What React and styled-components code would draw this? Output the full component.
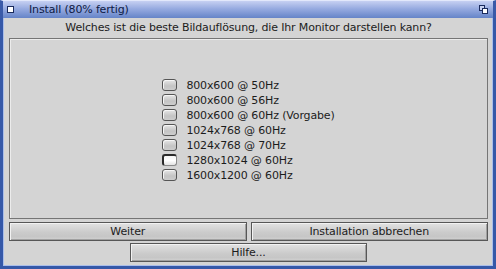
import React from 'react';
import styled, { createGlobalStyle } from 'styled-components';

const Global = createGlobalStyle`
  html, body { margin: 0; padding: 0; background: #d4d4d4; }
  body { font-family: "DejaVu Sans", Verdana, sans-serif; }
`;

const Window = styled.div`
  width: 496px;
  height: 269px;
  display: flex;
  flex-direction: column;
  box-sizing: border-box;
  font-family: "DejaVu Sans", Verdana, sans-serif;
  font-size: 11px;
  letter-spacing: -0.15px;
  color: #1c1c1c;
`;

const TitleBar = styled.div`
  height: 18px;
  flex: none;
  display: flex;
  align-items: center;
  box-sizing: border-box;
  background: linear-gradient(#c6d0f2, #97abe0 45%, #6584c8);
  border-top: 1px solid #e2e8fb;
  border-left: 3px solid #3a5aa8;
  border-right: 3px solid #3a5aa8;
  padding: 0 3px 0 4px;
`;

const CloseGadget = styled.div`
  width: 5px;
  height: 5px;
  background: #ffffff;
  border: 1px solid #1a2a5c;
  flex: none;
`;

const Title = styled.span`
  margin-left: 15px;
  color: #0e1a44;
  flex: 1;
  line-height: 16px;
`;

const Frame = styled.div`
  flex: 1;
  display: flex;
  flex-direction: column;
  background: #d4d4d4;
  border: 3px solid #3558a8;
  border-top: none;
  box-shadow: inset 1px 0 0 #a9bdea, inset -1px 0 0 #a9bdea, inset 0 -1px 0 #a9bdea;
  padding: 0 5px 4px 6px;
  min-height: 0;
`;

const Question = styled.div`
  height: 20px;
  flex: none;
  display: flex;
  align-items: center;
  justify-content: center;
  padding-bottom: 1px;
  box-sizing: border-box;
`;

const Panel = styled.div`
  height: 181px;
  flex: none;
  box-sizing: border-box;
  border: 1px solid #757575;
  box-shadow: inset 1px 1px 0 #ececec;
  background: #d4d4d4;
  display: flex;
  align-items: center;
  justify-content: center;
  padding-top: 3px;
`;

const List = styled.div`
  display: flex;
  flex-direction: column;
`;

const Row = styled.div`
  height: 15px;
  display: flex;
  align-items: center;
  gap: 9px;
`;

const Check = styled.span`
  width: 15px;
  height: 12px;
  box-sizing: border-box;
  border-radius: 3px;
  flex: none;
  border: 1px solid #4e4e4e;
  border-top-width: ${p => (p.$checked ? '2px' : '1px')};
  border-left-width: ${p => (p.$checked ? '2px' : '1px')};
  border-color: ${p => (p.$checked ? '#2a2a2a #8a8a8a #8a8a8a #2a2a2a' : '#555')};
  background: ${p =>
    p.$checked
      ? 'linear-gradient(#f4f4f4, #ffffff 50%, #e2e2e2)'
      : 'linear-gradient(#e6e6e6, #c4c4c4 60%, #cdcdcd)'};
  box-shadow: ${p => (p.$checked ? 'none' : 'inset 1px 1px 0 #f6f6f6')};
`;

const ButtonRow = styled.div`
  display: grid;
  grid-template-columns: 1fr 1fr;
  gap: 4px;
  margin-top: 3px;
`;

const Button = styled.div`
  height: 19px;
  box-sizing: border-box;
  border: 1px solid #575757;
  box-shadow: inset 1px 1px 0 #f2f2f2, inset -1px -1px 0 #a0a0a0;
  background: linear-gradient(#e2e2e2, #cbcbcb 55%, #c6c6c6 80%, #d2d2d2);
  display: flex;
  align-items: center;
  justify-content: center;
  color: #1c1c1c;
  ${p => (p.$narrow ? 'width: 237px; align-self: center;' : '')}
`;

const HelpRow = styled.div`
  display: flex;
  justify-content: center;
  margin-top: 2px;
`;

const DepthGadget = () => (
  <svg width="9" height="9" viewBox="0 0 9 9" style={{ flex: 'none', marginRight: 2 }}>
    <rect x="0.5" y="0.5" width="5" height="5" fill="#c9d3f2" stroke="#1a2a5c" />
    <rect x="3.5" y="3.5" width="5" height="5" fill="#ffffff" stroke="#1a2a5c" />
  </svg>
);

const options = [
  { label: '800x600 @ 50Hz' },
  { label: '800x600 @ 56Hz' },
  { label: '800x600 @ 60Hz (Vorgabe)' },
  { label: '1024x768 @ 60Hz' },
  { label: '1024x768 @ 70Hz' },
  { label: '1280x1024 @ 60Hz', checked: true },
  { label: '1600x1200 @ 60Hz' },
];

export default function App() {
  return (
    <>
      <Global />
      <Window>
        <TitleBar>
          <CloseGadget />
          <Title>Install (80% fertig)</Title>
          <DepthGadget />
        </TitleBar>
        <Frame>
          <Question>Welches ist die beste Bildauflösung, die Ihr Monitor darstellen kann?</Question>
          <Panel>
            <List>
              {options.map(o => (
                <Row key={o.label}>
                  <Check $checked={o.checked} />
                  <span>{o.label}</span>
                </Row>
              ))}
            </List>
          </Panel>
          <ButtonRow>
            <Button>Weiter</Button>
            <Button>Installation abbrechen</Button>
          </ButtonRow>
          <HelpRow>
            <Button $narrow>Hilfe...</Button>
          </HelpRow>
        </Frame>
      </Window>
    </>
  );
}
